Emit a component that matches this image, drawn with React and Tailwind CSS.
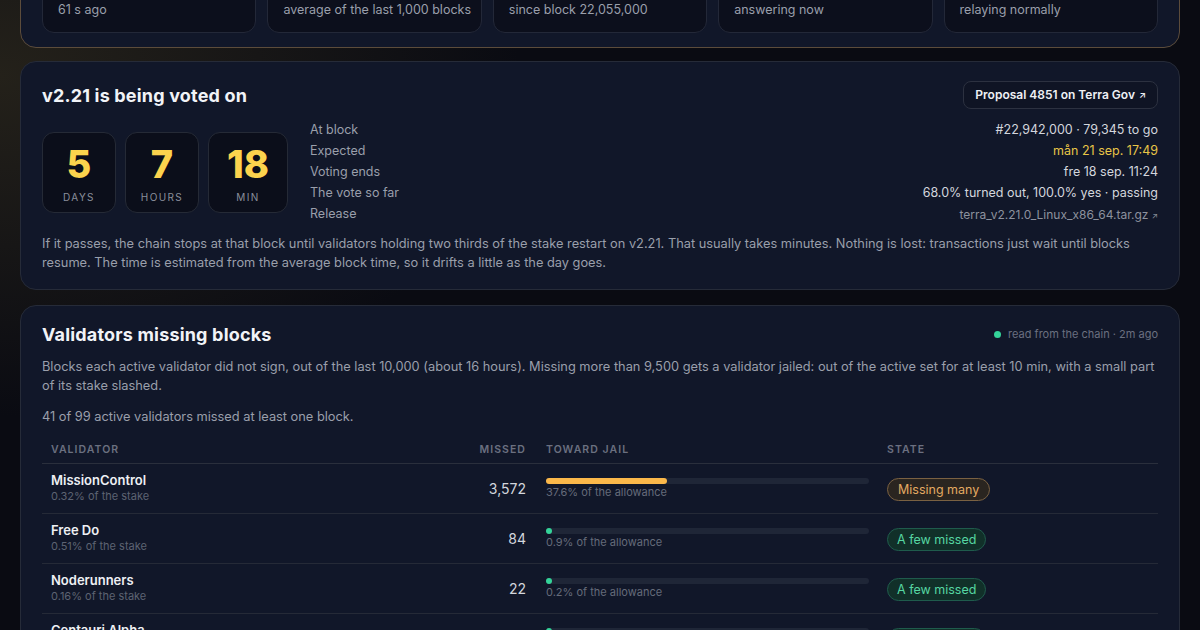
const stats = [
  { label: "Last block", value: "#22,862,655", sub: "61 s ago" },
  { label: "Block time", value: "5.98 s", sub: "average of the last 1,000 blocks" },
  { label: "Running", value: "v2.20", sub: "since block 22,055,000" },
  { label: "RPC", value: "Online", sub: "answering now" },
  { label: "Relayer", value: "Online", sub: "relaying normally" },
];

const details = [
  { label: "At block", value: "#22,942,000 · 79,345 to go", tone: "text-[#d3d6dd]" },
  { label: "Expected", value: "mån 21 sep. 17:49", tone: "text-[#e8c547]" },
  { label: "Voting ends", value: "fre 18 sep. 11:24", tone: "text-[#d3d6dd]" },
  { label: "The vote so far", value: "68.0% turned out, 100.0% yes · passing", tone: "text-[#d3d6dd]" },
];

const validators = [
  { name: "MissionControl", stake: "0.32%", missed: "3,572", pct: 37.6, state: "many" },
  { name: "Free Do", stake: "0.51%", missed: "84", pct: 0.9, state: "few" },
  { name: "Noderunners", stake: "0.16%", missed: "22", pct: 0.2, state: "few" },
  { name: "Centauri Alpha", stake: "0.44%", missed: "17", pct: 0.2, state: "few" },
  { name: "Orbital Command", stake: "0.28%", missed: "9", pct: 0.1, state: "few" },
];

const Countdown = ({ value, label, wide }) => (
  <div
    className={`${wide ? "w-[80px]" : "w-[74px]"} h-[81px] rounded-xl border border-[#252a36] bg-[#0b0e1a] flex flex-col items-center justify-center`}
  >
    <span className="text-[38px] leading-[44px] font-extrabold text-[#fcd34d]">{value}</span>
    <span className="mt-[5px] text-[10px] leading-[12px] tracking-[0.14em] text-[#8a8f9b]">{label}</span>
  </div>
);

const Badge = ({ state }) =>
  state === "many" ? (
    <span className="inline-flex h-[23px] items-center rounded-full border border-[#7a6142] bg-[#2a2520] px-[10px] text-[12.5px] text-[#e3aa62]">
      Missing many
    </span>
  ) : (
    <span className="inline-flex h-[23px] items-center rounded-full border border-[#1f5b4c] bg-[#113029] px-[9px] text-[12.5px] text-[#56d6a2]">
      A few missed
    </span>
  );

export default function App() {
  return (
    <div
      className="h-[630px] overflow-hidden bg-[#0a0b12] bg-[radial-gradient(ellipse_520px_340px_at_0%_12%,#24211a,#0a0b12)] px-[20px]"
      style={{ fontFamily: "Inter, 'Noto Sans', sans-serif" }}
    >
      <div className="-mt-[83px] flex flex-col">
        {/* status strip */}
        <div className="rounded-2xl border border-[#5c4c3b] bg-[#111729] px-[21px] pt-[15px] pb-[14px]">
          <div className="grid grid-cols-5 gap-[11px]">
            {stats.map((s) => (
              <div key={s.label} className="rounded-xl border border-[#232838] bg-[#0c0f1c] px-[15px] pt-[13px] pb-[13px] whitespace-nowrap">
                <div className="text-[11px] leading-[16px] uppercase tracking-wider text-[#6b7080]">{s.label}</div>
                <div className="mt-[6px] text-[20px] leading-[28px] font-semibold text-[#eef0f4]">{s.value}</div>
                <div className="mt-[4px] text-[12.5px] leading-[18px] text-[#9a9fab]">{s.sub}</div>
              </div>
            ))}
          </div>
        </div>

        {/* upgrade vote */}
        <div className="mt-[13px] rounded-2xl border border-[#262b38] bg-[#111729] px-[21px] pt-[19px] pb-[17px]">
          <div className="flex h-[28px] items-center justify-between">
            <h2 className="text-[18px] font-bold tracking-[0.01em] text-[#f1f3f7]">v2.21 is being voted on</h2>
            <a className="flex h-[28px] items-center gap-1 rounded-lg border border-[#2c3140] bg-[#0f1424] px-[11px] text-[12px] font-semibold text-[#eef0f4]">
              Proposal 4851 on Terra Gov <span className="text-[9px]">↗</span>
            </a>
          </div>

          <div className="mt-[11px] flex items-center">
            <div className="flex gap-[9px]">
              <Countdown value="5" label="DAYS" />
              <Countdown value="7" label="HOURS" />
              <Countdown value="18" label="MIN" wide />
            </div>
            <div className="ml-[22px] flex-1 text-[12.5px]">
              {details.map((d) => (
                <div key={d.label} className="flex h-[21px] items-center justify-between">
                  <span className="text-[#9a9fab]">{d.label}</span>
                  <span className={d.tone}>{d.value}</span>
                </div>
              ))}
              <div className="flex h-[21px] items-center justify-between">
                <span className="text-[#9a9fab]">Release</span>
                <span className="text-[12px] text-[#8d929e]">
                  terra_v2.21.0_Linux_x86_64.tar.gz <span className="text-[8px]">↗</span>
                </span>
              </div>
            </div>
          </div>

          <p className="mt-[9px] text-[12.8px] leading-[19px] text-[#9a9fab]">
            If it passes, the chain stops at that block until validators holding two thirds of the stake restart on v2.21. That usually takes minutes. Nothing is lost: transactions just wait until blocks resume. The time is estimated from the average block time, so it drifts a little as the day goes.
          </p>
        </div>

        {/* validators */}
        <div className="mt-[15px] rounded-2xl border border-[#262b38] bg-[#111729] px-[21px] pt-[16px] pb-[19px]">
          <div className="flex h-[24px] items-center justify-between">
            <h2 className="text-[18px] font-bold tracking-[0.01em] text-[#f1f3f7]">Validators missing blocks</h2>
            <div className="flex items-center gap-[7px] text-[11px] text-[#6b7080]">
              <span className="h-[7px] w-[7px] rounded-full bg-[#34d399]" />
              read from the chain · 2m ago
            </div>
          </div>
          <p className="mt-[12px] text-[12.8px] leading-[18.5px] text-[#9a9fab]">
            Blocks each active validator did not sign, out of the last 10,000 (about 16 hours). Missing more than 9,500 gets a validator jailed: out of the active set for at least 10 min, with a small part of its stake slashed.
          </p>
          <p className="mt-[13px] text-[12.8px] leading-[18px] text-[#9a9fab]">
            41 of 99 active validators missed at least one block.
          </p>

          <div className="mt-[11px]">
            <div className="grid h-[27px] grid-cols-[424px_70px_343px_1fr] items-center border-b border-[#2a2f3c] text-[10.5px] font-semibold tracking-[0.1em] text-[#6b7080]">
              <span className="pl-[9px]">VALIDATOR</span>
              <span className="pr-[10px] text-right">MISSED</span>
              <span className="pl-[10px]">TOWARD JAIL</span>
              <span className="pl-[8px]">STATE</span>
            </div>
            {validators.map((v) => (
              <div
                key={v.name}
                className="grid grid-cols-[424px_70px_343px_1fr] items-center border-b border-[#252a37] py-[8px]"
              >
                <div className="pl-[9px]">
                  <div className="text-[13px] leading-[16px] font-semibold text-[#eef0f4]">{v.name}</div>
                  <div className="text-[11px] leading-[17px] text-[#5d6372]">{v.stake} of the stake</div>
                </div>
                <div className="pr-[10px] text-right text-[14px] text-[#d3d6dd]">{v.missed}</div>
                <div className="px-[10px]">
                  <div className="h-[6px] w-full rounded-full bg-[#1f2637]">
                    <div
                      className={`h-[6px] min-w-[6px] rounded-full ${v.state === "many" ? "bg-[#fbb84a]" : "bg-[#34d399]"}`}
                      style={{ width: `${v.pct}%` }}
                    />
                  </div>
                  <div className="mt-[1px] text-[11px] leading-[14px] text-[#656b7a]">{v.pct}% of the allowance</div>
                </div>
                <div className="pl-[8px]">
                  <Badge state={v.state} />
                </div>
              </div>
            ))}
          </div>
        </div>
      </div>
    </div>
  );
}
